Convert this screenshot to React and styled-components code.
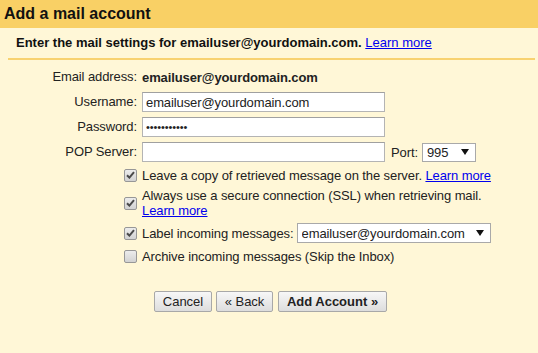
import React from "react";
import styled, { createGlobalStyle } from "styled-components";

const Global = createGlobalStyle`
  html, body { margin: 0; padding: 0; background: #fff7d7; }
  body { font-family: "Liberation Sans", Arial, sans-serif; font-size: 13px; color: #222; letter-spacing: -0.1px; }
`;

const Page = styled.div`
  width: 538px;
  height: 353px;
  background: #fff7d7;
  overflow: hidden;
`;

const Header = styled.div`
  height: 28px;
  background: #f9d065;
  display: flex;
  align-items: center;
  padding-left: 4px;
  font-weight: bold;
  font-size: 16px;
  letter-spacing: 0;
  color: #111;
`;

const Intro = styled.div`
  margin: 0 3px 0 8px;
  padding: 7px 0 8px 8px;
  border-bottom: 2px solid #f8d270;
  font-weight: bold;
  font-size: 13px;
  letter-spacing: 0;
  color: #111;
`;

const Link = styled.a`
  color: #0000ee;
  text-decoration: underline;
  font-weight: normal;
  cursor: pointer;
`;

const Form = styled.div`
  display: grid;
  grid-template-columns: 137px auto;
  column-gap: 5px;
  row-gap: 5px;
  padding-top: 7px;
  align-items: center;
`;

const Label = styled.div`
  line-height: 20px;
  color: #222;
  display: flex;
  justify-content: flex-end;
  align-items: center;
`;

const Value = styled.div`
  display: flex;
  align-items: center;
  gap: ${(p) => p.$gap || 4}px;
  min-height: 20px;
  line-height: 15px;
  font-weight: ${(p) => (p.$bold ? "bold" : "normal")};
  color: #222;
`;

const TextInput = styled.input`
  box-sizing: border-box;
  width: 243px;
  height: 20px;
  margin: 0;
  padding: 1px 3px;
  border: 1px solid #b4b4b4;
  border-top-color: #a0a0a0;
  background: #fff;
  font-family: "Liberation Sans", Arial, sans-serif;
  font-size: ${(p) => (p.type === "password" ? 11 : 13)}px;
  letter-spacing: -0.1px;
  color: #222;
  outline: none;
`;

const PortLabel = styled.span`
  margin-left: 2px;
`;

const SelectWrap = styled.span`
  position: relative;
  display: inline-flex;
`;

const NativeSelect = styled.select`
  appearance: none;
  -webkit-appearance: none;
  box-sizing: border-box;
  width: ${(p) => p.$w}px;
  height: ${(p) => p.$h || 19}px;
  margin: 0;
  padding: 0 18px 0 4px;
  border: 1px solid #a9a9a9;
  border-radius: 0;
  background: #fff;
  font-family: "Liberation Sans", Arial, sans-serif;
  font-size: 13px;
  letter-spacing: -0.1px;
  color: #222;
  outline: none;
`;

const Arrow = styled.svg`
  position: absolute;
  right: 7px;
  top: 50%;
  margin-top: -3px;
  pointer-events: none;
`;

const Box = styled.span`
  box-sizing: border-box;
  width: 13px;
  height: 13px;
  border: 1px solid #979797;
  border-radius: 2px;
  background: linear-gradient(#ececec, #d2d2d2);
  display: inline-flex;
  align-items: center;
  justify-content: center;
`;

const CheckCell = styled.div`
  display: flex;
  justify-content: flex-end;
  align-items: center;
`;

const CheckText = styled.div`
  line-height: 15px;
  color: #222;
  display: flex;
  align-items: center;
  min-height: 16px;
`;

const Buttons = styled.div`
  display: flex;
  justify-content: center;
  gap: 4px;
  padding-top: 27px;
  padding-left: 3px;
`;

const Button = styled.button`
  box-sizing: border-box;
  height: 21px;
  width: ${(p) => p.$w}px;
  margin: 0 ${(p) => p.$mr || 0}px 0 0;
  padding: 0;
  border: 1px solid #a8a8a8;
  border-radius: 2px;
  background: linear-gradient(#f7f7f7, #dddddd);
  font-family: "Liberation Sans", Arial, sans-serif;
  font-size: 13px;
  font-weight: ${(p) => (p.$bold ? "bold" : "normal")};
  color: #222;
  cursor: pointer;
`;

function Check({ checked }) {
  return (
    <Box>
      {checked && (
        <svg width="9" height="8" viewBox="0 0 9 8">
          <path d="M1 4.2 L3.4 6.6 L8 1.2" fill="none" stroke="#4a4a4a" strokeWidth="2" />
        </svg>
      )}
    </Box>
  );
}

function Select({ width, height, value }) {
  return (
    <SelectWrap>
      <NativeSelect $w={width} $h={height} defaultValue={value}>
        <option>{value}</option>
      </NativeSelect>
      <Arrow width="8" height="6" viewBox="0 0 8 6">
        <path d="M0 0 H8 L4 6 Z" fill="#111" />
      </Arrow>
    </SelectWrap>
  );
}

export default function App() {
  return (
    <Page>
      <Global />
      <Header>Add a mail account</Header>
      <Intro>
        Enter the mail settings for emailuser@yourdomain.com. <Link>Learn more</Link>
      </Intro>
      <Form>
        <Label>Email address:</Label>
        <Value $bold>emailuser@yourdomain.com</Value>

        <Label>Username:</Label>
        <Value>
          <TextInput defaultValue="emailuser@yourdomain.com" />
        </Value>

        <Label>Password:</Label>
        <Value>
          <TextInput type="password" defaultValue="passwordxyz" />
        </Value>

        <Label>POP Server:</Label>
        <Value>
          <TextInput defaultValue="" />
          <PortLabel>Port:</PortLabel>
          <Select width={54} value="995" />
        </Value>

        <CheckCell><Check checked /></CheckCell>
        <CheckText>
          <span>
            Leave a copy of retrieved message on the server. <Link>Learn more</Link>
          </span>
        </CheckText>

        <CheckCell><Check checked /></CheckCell>
        <CheckText>
          <span>
            Always use a secure connection (SSL) when retrieving mail.
            <br />
            <Link>Learn more</Link>
          </span>
        </CheckText>

        <CheckCell><Check checked /></CheckCell>
        <Value $gap={3}>
          Label incoming messages:
          <Select width={194} height={20} value="emailuser@yourdomain.com" />
        </Value>

        <CheckCell><Check /></CheckCell>
        <CheckText>Archive incoming messages (Skip the Inbox)</CheckText>
      </Form>
      <Buttons>
        <Button $w={58}>Cancel</Button>
        <Button $w={57} $mr={1}>« Back</Button>
        <Button $w={109} $bold>Add Account »</Button>
      </Buttons>
    </Page>
  );
}
